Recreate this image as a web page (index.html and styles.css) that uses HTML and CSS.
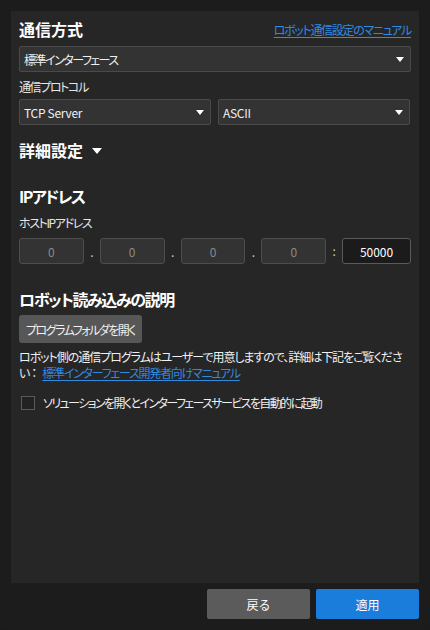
FILE: index.html
```html
<!DOCTYPE html>
<html lang="ja">
<head>
<meta charset="utf-8">
<link rel="stylesheet" href="styles.css">
</head>
<body>
<div class="window">
  <div class="panel">
    <div class="title-row">
      <span class="h">通信方式</span>
      <a class="link small" href="#">ロボット通信設定のマニュアル</a>
    </div>
    <div class="select full">
      <span class="kana">標準インターフェース</span><span class="caret"></span>
    </div>
    <div class="label">通信プロトコル</div>
    <div class="select-row">
      <div class="select"><span class="latin">TCP Server</span><span class="caret"></span></div>
      <div class="select"><span class="latin">ASCII</span><span class="caret"></span></div>
    </div>
    <div class="h detail">詳細設定 <span class="caret big"></span></div>
    <div class="h ip-title">IPアドレス</div>
    <div class="label host">ホストIPアドレス</div>
    <div class="ip-row">
      <div class="ip">0</div><span class="sep">.</span>
      <div class="ip">0</div><span class="sep">.</span>
      <div class="ip">0</div><span class="sep">.</span>
      <div class="ip">0</div><span class="sep colon">:</span>
      <div class="port">50000</div>
    </div>
    <div class="h robot-title">ロボット読み込みの説明</div>
    <button class="btn-folder">プログラムフォルダを開く</button>
    <p class="desc"><span class="line1">ロボット側の通信プログラムはユーザーで用意しますので、詳細は下記をご覧くださ</span><br><span class="line2">い：</span><a class="link doc" href="#">標準インターフェース開発者向けマニュアル</a></p>
    <label class="check-row"><span class="box"></span><span class="check-text">ソリューションを開くとインターフェースサービスを自動的に起動</span></label>
  </div>
  <div class="footer">
    <button class="btn back">戻る</button>
    <button class="btn apply">適用</button>
  </div>
</div>
</body>
</html>
```

FILE: styles.css
```css
* { box-sizing: border-box; }
html, body { margin: 0; padding: 0; background: #1b1b1b; }
body {
  font-family: "Noto Sans CJK JP", "Noto Sans", sans-serif;
  font-feature-settings: "palt";
  color: #e8e8e8;
  font-size: 12px;
}
.window {
  width: 430px;
  height: 630px;
  background: #1c1c1c;
  border-radius: 0 0 8px 8px;
  padding: 11px 11px 0 11px;
  display: flex;
  flex-direction: column;
}
.panel {
  background: #262626;
  height: 572px;
  padding: 8px 8px 0 8px;
  display: flex;
  flex-direction: column;
}
.h {
  font-size: 16px;
  font-weight: 700;
  line-height: 20px;
  color: #ffffff;
}
.title-row {
  display: flex;
  justify-content: space-between;
  align-items: center;
  height: 20px;
}
.link {
  color: #2f8ae0;
  text-decoration: underline;
  text-underline-offset: 2px;
}
.small { font-size: 12px; line-height: 16px; margin-top: 2px; letter-spacing: -1.3px; }
.select {
  height: 26px;
  background: #333333;
  border: 1px solid #4a4a4a;
  border-radius: 2px;
  display: flex;
  align-items: center;
  justify-content: space-between;
  padding: 0 6px 0 4px;
  font-size: 12px;
  color: #f0f0f0;
}
.kana { letter-spacing: -1.5px; }
.latin { letter-spacing: -0.3px; }
.select.full { margin-top: 7px; }
.caret {
  width: 0; height: 0;
  border-left: 4px solid transparent;
  border-right: 4px solid transparent;
  border-top: 5px solid #ffffff;
}
.caret.big {
  display: inline-block;
  border-left-width: 5px;
  border-right-width: 5px;
  border-top-width: 6px;
  margin-left: 5px;
  vertical-align: 3px;
}
.label { line-height: 16px; margin-top: 7px; color: #e6e6e6; letter-spacing: -1.4px; }
.select-row {
  display: grid;
  grid-template-columns: 192px 192px;
  gap: 7px;
  margin-top: 4px;
}
.detail { margin-top: 15px; }
.ip-title { margin-top: 26px; letter-spacing: -1.6px; }
.host { margin-top: 9px; }
.ip-row {
  display: flex;
  align-items: center;
  margin-top: 7px;
  height: 26px;
}
.ip {
  width: 65px;
  height: 26px;
  background: #333333;
  border: 1px solid #4d4d4d;
  border-radius: 3px;
  display: flex;
  align-items: center;
  justify-content: center;
  color: #8a8a8a;
}
.sep {
  width: 16px;
  text-align: center;
  color: #cccccc;
  line-height: 26px;
  padding-top: 2px;
}
.colon { padding-top: 0; }
.port {
  width: 69px;
  height: 26px;
  background: #1b1b1b;
  border: 1px solid #5a5a5a;
  border-radius: 3px;
  display: flex;
  align-items: center;
  justify-content: center;
  color: #ffffff;
}
.robot-title { margin-top: 25px; letter-spacing: -1.4px; }
.btn-folder {
  align-self: flex-start;
  margin-top: 6px;
  height: 28px;
  width: 123px;
  padding: 0;
  background: #575757;
  color: #f0f0f0;
  border: none;
  border-radius: 3px;
  font-family: inherit;
  font-feature-settings: "palt";
  font-size: 12px;
  letter-spacing: -1.5px;
  white-space: nowrap;
}
.desc {
  margin: 6px 0 0 0;
  line-height: 16px;
  color: #f0f0f0;
  white-space: nowrap;
}
.line1 { letter-spacing: -1.05px; }
.line2 { letter-spacing: 1px; }
.doc { margin-left: 4px; letter-spacing: -1.25px; }
.check-row {
  display: flex;
  align-items: center;
  margin-top: 14px;
  line-height: 16px;
  color: #f0f0f0;
}
.check-text { letter-spacing: -1.6px; }
.box {
  width: 14px;
  height: 14px;
  border: 1px solid #5a5a5a;
  background: #222222;
  margin: 0 8px 0 2px;
}
.footer {
  display: flex;
  justify-content: flex-end;
  gap: 6px;
  margin-top: 6px;
}
.btn {
  width: 103px;
  height: 30px;
  border: none;
  border-radius: 2px;
  color: #ffffff;
  font-family: inherit;
  font-size: 12px;
}
.back { background: #5b5b5b; }
.apply { background: #1a7cdb; }
```
